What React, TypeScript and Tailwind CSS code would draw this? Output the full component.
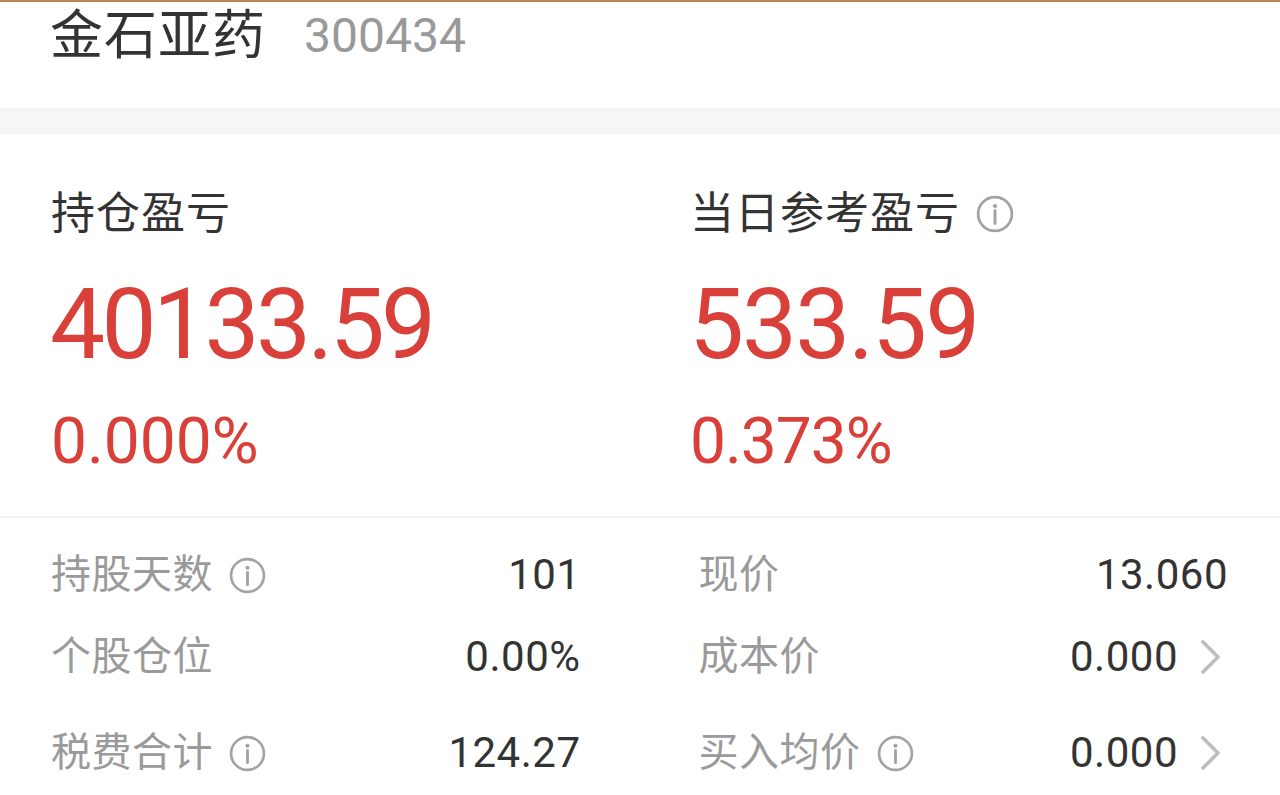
import React from 'react';

const InfoIcon: React.FC<{ className?: string }> = ({ className }) => (
  <svg viewBox="0 0 36 36" className={className} fill="none">
    <circle cx="18" cy="18" r="16" stroke="#a3a3a3" strokeWidth="2.6" />
    <circle cx="18" cy="10.5" r="2" fill="#a3a3a3" />
    <line x1="18" y1="15" x2="18" y2="27" stroke="#a3a3a3" strokeWidth="2.8" strokeLinecap="round" />
  </svg>
);

const Chevron: React.FC = () => (
  <svg viewBox="0 0 22 34" className="w-[22px] h-[34px] mr-[6px]" fill="none">
    <polyline points="3,2 18,17 3,32" stroke="#bdbdbd" strokeWidth="3.6" strokeLinecap="round" strokeLinejoin="round" />
  </svg>
);

const cjk = "font-['Roboto','Noto_Sans_CJK_SC',sans-serif]";

interface StatRowProps {
  label: string;
  value: string;
  info?: boolean;
  arrow?: boolean;
  className?: string;
}

const StatRow: React.FC<StatRowProps> = ({ label, value, info, arrow, className }) => (
  <div className={`flex items-center justify-between h-[50px] ${className ?? ''}`}>
    <div className="flex items-center gap-[16px] -ml-[1px]">
      <span className="text-[40px] leading-none text-[#9a9a9a] tracking-[0.5px]">{label}</span>
      {info && <InfoIcon className="w-[37px] h-[37px]" />}
    </div>
    <div className="flex items-center gap-[22px]">
      <span className="text-[42px] leading-none text-[#333333] tracking-[0.5px]">{value}</span>
      {arrow && <Chevron />}
    </div>
  </div>
);

export default function App() {
  return (
    <div className={`w-[1280px] h-[795px] overflow-hidden bg-white ${cjk}`}>
      <div className="h-[2px] bg-[#b9835b]" />
      {/* header */}
      <div className="h-[106px] pl-[50px] pr-[52px] flex items-start">
        <div className="flex items-center gap-[38px] -mt-[6px]">
          <span className="text-[53px] leading-[80px] text-[#333333] tracking-[1px]">金石亚药</span>
          <span className="text-[48px] leading-[80px] text-[#999999]">300434</span>
        </div>
      </div>
      <div className="h-[26px] bg-[#f5f6f8]" />

      {/* profit summary */}
      <div className="grid grid-cols-2 h-[384px] border-b-2 border-[#f3f3f3]">
        <div className="pl-[51px] pt-[58px]">
          <div className="text-[44px] leading-none text-[#333333] tracking-[1px]">持仓盈亏</div>
          <div className="mt-[40px] -ml-[1px] text-[98px] leading-none text-[#d9403a] tracking-[-3.6px]">40133.59</div>
          <div className="mt-[36px] text-[64px] leading-none text-[#d9403a] tracking-[0px]">0.000%</div>
        </div>
        <div className="pl-[50px] pt-[58px]">
          <div className="flex items-center gap-[16px]">
            <span className="text-[44px] leading-none text-[#333333] tracking-[1px]">当日参考盈亏</span>
            <InfoIcon className="w-[38px] h-[38px]" />
          </div>
          <div className="mt-[40px] -ml-[1px] text-[98px] leading-none text-[#d9403a] tracking-[-2px]">533.59</div>
          <div className="mt-[36px] text-[64px] leading-none text-[#d9403a] tracking-[-1px]">0.373%</div>
        </div>
      </div>

      {/* details */}
      <div className="grid grid-cols-2 gap-x-[119px] px-[52px] pt-[32px]">
        <div className="flex flex-col">
          <StatRow label="持股天数" value="101" info />
          <StatRow label="个股仓位" value="0.00%" className="mt-[32px]" />
          <StatRow label="税费合计" value="124.27" info className="mt-[46px]" />
        </div>
        <div className="flex flex-col">
          <StatRow label="现价" value="13.060" />
          <StatRow label="成本价" value="0.000" arrow className="mt-[32px]" />
          <StatRow label="买入均价" value="0.000" info arrow className="mt-[46px]" />
        </div>
      </div>
    </div>
  );
}
